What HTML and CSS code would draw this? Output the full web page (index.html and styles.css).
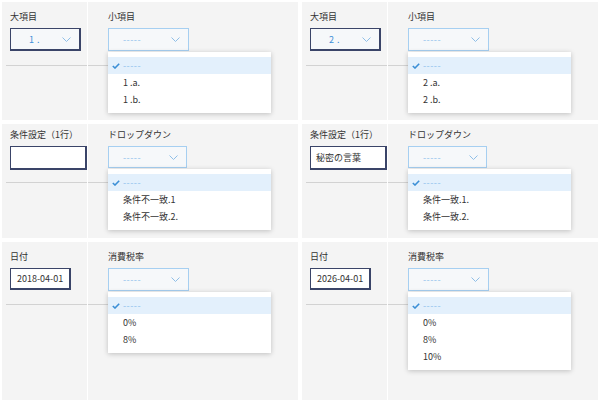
FILE: index.html
```html
<!DOCTYPE html>
<html lang="ja">
<head>
  <meta charset="UTF-8" />
  <title>フォーム設定サンプル</title>
  <link rel="stylesheet" href="styles.css">
</head>
<body>
  <div class="board">

    <!-- 大項目 / 小項目 -->
    <section class="panel">
      <div class="col col-main">
        <div class="field">
          <div class="label">大項目</div>
          <div class="select select-dark select-main">
            <span class="select-value value-set">1 .</span>
            <svg class="chevron" width="9" height="5" viewBox="0 0 9 5"><polyline points="0.5,0.5 4.5,4.5 8.5,0.5" /></svg>
          </div>
        </div>
        <div class="rule"></div>
      </div>
      <div class="col col-sub">
        <div class="field">
          <div class="label">小項目</div>
          <div class="select-wrap">
            <div class="select select-open">
              <span class="select-value">-----</span>
              <svg class="chevron" width="9" height="5" viewBox="0 0 9 5"><polyline points="0.5,0.5 4.5,4.5 8.5,0.5" /></svg>
            </div>
            <ul class="menu">
              <li class="menu-item is-selected"><svg class="check" width="8" height="6" viewBox="0 0 8 6"><polyline points="0.8,3 3,5 7.2,0.8" /></svg><span class="dash">-----</span></li>
              <li class="menu-item">1 .a.</li>
              <li class="menu-item">1 .b.</li>
            </ul>
          </div>
        </div>
        <div class="rule"></div>
      </div>
    </section>

    <section class="panel">
      <div class="col col-main">
        <div class="field">
          <div class="label">大項目</div>
          <div class="select select-dark select-main">
            <span class="select-value value-set">2 .</span>
            <svg class="chevron" width="9" height="5" viewBox="0 0 9 5"><polyline points="0.5,0.5 4.5,4.5 8.5,0.5" /></svg>
          </div>
        </div>
        <div class="rule"></div>
      </div>
      <div class="col col-sub">
        <div class="field">
          <div class="label">小項目</div>
          <div class="select-wrap">
            <div class="select select-open">
              <span class="select-value">-----</span>
              <svg class="chevron" width="9" height="5" viewBox="0 0 9 5"><polyline points="0.5,0.5 4.5,4.5 8.5,0.5" /></svg>
            </div>
            <ul class="menu">
              <li class="menu-item is-selected"><svg class="check" width="8" height="6" viewBox="0 0 8 6"><polyline points="0.8,3 3,5 7.2,0.8" /></svg><span class="dash">-----</span></li>
              <li class="menu-item">2 .a.</li>
              <li class="menu-item">2 .b.</li>
            </ul>
          </div>
        </div>
        <div class="rule"></div>
      </div>
    </section>

    <!-- 条件設定 / ドロップダウン -->
    <section class="panel panel-short">
      <div class="col col-main">
        <div class="field">
          <div class="label">条件設定（1行）</div>
          <div class="text-input"></div>
        </div>
        <div class="rule"></div>
      </div>
      <div class="col col-sub">
        <div class="field">
          <div class="label">ドロップダウン</div>
          <div class="select-wrap">
            <div class="select select-open select-short">
              <span class="select-value">-----</span>
              <svg class="chevron" width="9" height="5" viewBox="0 0 9 5"><polyline points="0.5,0.5 4.5,4.5 8.5,0.5" /></svg>
            </div>
            <ul class="menu">
              <li class="menu-item is-selected"><svg class="check" width="8" height="6" viewBox="0 0 8 6"><polyline points="0.8,3 3,5 7.2,0.8" /></svg><span class="dash">-----</span></li>
              <li class="menu-item">条件不一致.1</li>
              <li class="menu-item">条件不一致.2.</li>
            </ul>
          </div>
        </div>
        <div class="rule"></div>
      </div>
    </section>

    <section class="panel panel-short">
      <div class="col col-main">
        <div class="field">
          <div class="label">条件設定（1行）</div>
          <div class="text-input">秘密の言葉</div>
        </div>
        <div class="rule"></div>
      </div>
      <div class="col col-sub">
        <div class="field">
          <div class="label">ドロップダウン</div>
          <div class="select-wrap">
            <div class="select select-open select-short">
              <span class="select-value">-----</span>
              <svg class="chevron" width="9" height="5" viewBox="0 0 9 5"><polyline points="0.5,0.5 4.5,4.5 8.5,0.5" /></svg>
            </div>
            <ul class="menu">
              <li class="menu-item is-selected"><svg class="check" width="8" height="6" viewBox="0 0 8 6"><polyline points="0.8,3 3,5 7.2,0.8" /></svg><span class="dash">-----</span></li>
              <li class="menu-item">条件一致.1.</li>
              <li class="menu-item">条件一致.2.</li>
            </ul>
          </div>
        </div>
        <div class="rule"></div>
      </div>
    </section>

    <!-- 日付 / 消費税率 -->
    <section class="panel panel-date">
      <div class="col col-main">
        <div class="field">
          <div class="label">日付</div>
          <div class="date-input">2018-04-01</div>
        </div>
        <div class="rule"></div>
      </div>
      <div class="col col-sub">
        <div class="field">
          <div class="label">消費税率</div>
          <div class="select-wrap">
            <div class="select select-open">
              <span class="select-value">-----</span>
              <svg class="chevron" width="9" height="5" viewBox="0 0 9 5"><polyline points="0.5,0.5 4.5,4.5 8.5,0.5" /></svg>
            </div>
            <ul class="menu">
              <li class="menu-item is-selected"><svg class="check" width="8" height="6" viewBox="0 0 8 6"><polyline points="0.8,3 3,5 7.2,0.8" /></svg><span class="dash">-----</span></li>
              <li class="menu-item">0%</li>
              <li class="menu-item">8%</li>
            </ul>
          </div>
        </div>
        <div class="rule"></div>
      </div>
    </section>

    <section class="panel panel-date">
      <div class="col col-main">
        <div class="field">
          <div class="label">日付</div>
          <div class="date-input">2026-04-01</div>
        </div>
        <div class="rule"></div>
      </div>
      <div class="col col-sub">
        <div class="field">
          <div class="label">消費税率</div>
          <div class="select-wrap">
            <div class="select select-open">
              <span class="select-value">-----</span>
              <svg class="chevron" width="9" height="5" viewBox="0 0 9 5"><polyline points="0.5,0.5 4.5,4.5 8.5,0.5" /></svg>
            </div>
            <ul class="menu">
              <li class="menu-item is-selected"><svg class="check" width="8" height="6" viewBox="0 0 8 6"><polyline points="0.8,3 3,5 7.2,0.8" /></svg><span class="dash">-----</span></li>
              <li class="menu-item">0%</li>
              <li class="menu-item">8%</li>
              <li class="menu-item">10%</li>
            </ul>
          </div>
        </div>
        <div class="rule"></div>
      </div>
    </section>

  </div>
</body>
</html>
```

FILE: styles.css
```css
body, html {
  margin: 0;
  padding: 0;
  background-color: #ffffff;
  font-family: "Noto Sans CJK JP", "Noto Sans", sans-serif;
  font-size: 9px;
  color: #333333;
  overflow: hidden;
}

.board {
  display: grid;
  grid-template-columns: 296px 296px;
  grid-template-rows: 118px 114px 158px;
  gap: 4px;
  padding: 2px;
}

.panel {
  display: grid;
  grid-template-columns: 86px 1fr;
  background-color: #f4f4f4;
}

.col {
  display: flex;
  flex-direction: column;
}

.col-main {
  border-right: 1px solid #ffffff;
  padding-left: 4px;
}

.col-sub {
  padding-left: 0;
}

.field {
  height: 63px;
  box-sizing: border-box;
  padding-top: 9px;
}

.col-main .field {
  padding-left: 4px;
}

.col-sub .field {
  padding-left: 20px;
}

.panel-short .field {
  height: 58px;
  padding-top: 5px;
}

.panel-date .field {
  height: 62px;
}

.label {
  height: 12px;
  line-height: 12px;
  margin-bottom: 5px;
  white-space: nowrap;
}

.rule {
  border-top: 1px solid #d2d2d2;
}

.col-sub .rule {
  width: 40px;
}

/* select box */
.select-wrap {
  position: relative;
  display: inline-block;
}

.select {
  display: flex;
  align-items: center;
  justify-content: space-between;
  box-sizing: border-box;
  width: 81px;
  height: 23px;
  padding: 0 8px 0 14px;
  background-color: #f6f8fa;
  border: 1px solid #a6cff1;
}

.select-short {
  width: 79px;
  height: 22px;
}

.select-dark {
  border: 1px solid #3a4468;
  border-bottom-width: 2px;
  border-right-width: 2px;
}

.select-main {
  width: 71px;
  padding-left: 18px;
}

.select-value {
  color: #8fc0ec;
  letter-spacing: 0.5px;
}

.value-set {
  color: #3d8fd8;
}

.chevron polyline {
  fill: none;
  stroke: #8fbfe8;
  stroke-width: 1;
}

/* dropdown list */
.menu {
  position: absolute;
  top: 100%;
  left: 0;
  z-index: 5;
  width: 163px;
  margin: 1px 0 0 0;
  padding: 5px 0;
  list-style: none;
  background-color: #ffffff;
  box-shadow: 0 1px 5px rgba(0, 0, 0, 0.22);
}

.menu-item {
  display: flex;
  align-items: center;
  height: 17px;
  padding-left: 15px;
  white-space: nowrap;
}

.menu-item.is-selected {
  padding-left: 4px;
  background-color: #e3f0fc;
}

.check {
  margin-right: 3px;
}

.check polyline {
  fill: none;
  stroke: #3b8fd6;
  stroke-width: 1.6;
}

.dash {
  color: #8fc0ec;
  letter-spacing: 0.5px;
}

/* text inputs */
.text-input,
.date-input {
  box-sizing: border-box;
  display: flex;
  align-items: center;
  background-color: #ffffff;
  border: 1px solid #3a4468;
  border-bottom-width: 2px;
  border-right-width: 2px;
  white-space: nowrap;
}

.text-input {
  width: 77px;
  height: 24px;
  padding-left: 5px;
}

.date-input {
  width: 61px;
  height: 22px;
  padding-left: 6px;
}
```
